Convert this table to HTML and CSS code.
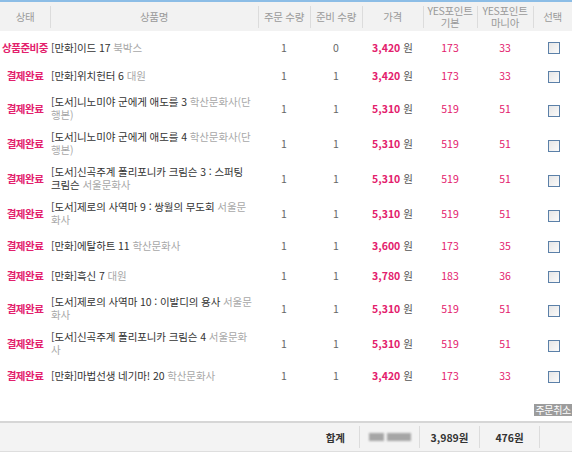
FILE: index.html
```html
<!DOCTYPE html>
<html lang="ko">
<head>
<meta charset="utf-8">
<link rel="stylesheet" href="styles.css">
</head>
<body>
<div class="wrap">
<table class="orders">
<colgroup>
<col class="c-status"><col class="c-name"><col class="c-qty"><col class="c-qty"><col class="c-price"><col class="c-pt1"><col class="c-pt2"><col class="c-sel">
</colgroup>
<thead>
<tr>
<th class="first">상태</th>
<th>상품명</th>
<th>주문 수량</th>
<th>준비 수량</th>
<th>가격</th>
<th>YES포인트<br>기본</th>
<th>YES포인트<br>마니아</th>
<th>선택</th>
</tr>
</thead>
<tbody>
<tr class="single">
<td class="status">상품준비중</td>
<td class="name">[만화]이드 17 <span class="pub">북박스</span></td>
<td class="num">1</td><td class="num">0</td>
<td class="price"><b>3,420</b> 원</td>
<td class="pt">173</td><td class="pt">33</td>
<td class="sel"><span class="chk"></span></td>
</tr>
<tr class="single">
<td class="status">결제완료</td>
<td class="name">[만화]위치헌터 6 <span class="pub">대원</span></td>
<td class="num">1</td><td class="num">1</td>
<td class="price"><b>3,420</b> 원</td>
<td class="pt">173</td><td class="pt">33</td>
<td class="sel"><span class="chk"></span></td>
</tr>
<tr>
<td class="status">결제완료</td>
<td class="name">[도서]니노미야 군에게 애도를 3 <span class="pub">학산문화사(단행본)</span></td>
<td class="num">1</td><td class="num">1</td>
<td class="price"><b>5,310</b> 원</td>
<td class="pt">519</td><td class="pt">51</td>
<td class="sel"><span class="chk low"></span></td>
</tr>
<tr>
<td class="status">결제완료</td>
<td class="name">[도서]니노미야 군에게 애도를 4 <span class="pub">학산문화사(단행본)</span></td>
<td class="num">1</td><td class="num">1</td>
<td class="price"><b>5,310</b> 원</td>
<td class="pt">519</td><td class="pt">51</td>
<td class="sel"><span class="chk low"></span></td>
</tr>
<tr>
<td class="status">결제완료</td>
<td class="name">[도서]신곡주계 폴리포니카 크림슨 3 : 스퍼팅 크림슨 <span class="pub">서울문화사</span></td>
<td class="num">1</td><td class="num">1</td>
<td class="price"><b>5,310</b> 원</td>
<td class="pt">519</td><td class="pt">51</td>
<td class="sel"><span class="chk low"></span></td>
</tr>
<tr>
<td class="status">결제완료</td>
<td class="name">[도서]제로의 사역마 9 : 쌍월의 무도회 <span class="pub">서울문화사</span></td>
<td class="num">1</td><td class="num">1</td>
<td class="price"><b>5,310</b> 원</td>
<td class="pt">519</td><td class="pt">51</td>
<td class="sel"><span class="chk low"></span></td>
</tr>
<tr class="single">
<td class="status">결제완료</td>
<td class="name">[만화]에탈하트 11 <span class="pub">학산문화사</span></td>
<td class="num">1</td><td class="num">1</td>
<td class="price"><b>3,600</b> 원</td>
<td class="pt">173</td><td class="pt">35</td>
<td class="sel"><span class="chk"></span></td>
</tr>
<tr class="single">
<td class="status">결제완료</td>
<td class="name">[만화]흑신 7 <span class="pub">대원</span></td>
<td class="num">1</td><td class="num">1</td>
<td class="price"><b>3,780</b> 원</td>
<td class="pt">183</td><td class="pt">36</td>
<td class="sel"><span class="chk"></span></td>
</tr>
<tr>
<td class="status">결제완료</td>
<td class="name">[도서]제로의 사역마 10 : 이발디의 용사 <span class="pub">서울문화사</span></td>
<td class="num">1</td><td class="num">1</td>
<td class="price"><b>5,310</b> 원</td>
<td class="pt">519</td><td class="pt">51</td>
<td class="sel"><span class="chk low"></span></td>
</tr>
<tr>
<td class="status">결제완료</td>
<td class="name">[도서]신곡주계 폴리포니카 크림슨 4 <span class="pub">서울문화사</span></td>
<td class="num">1</td><td class="num">1</td>
<td class="price"><b>5,310</b> 원</td>
<td class="pt">519</td><td class="pt">51</td>
<td class="sel"><span class="chk low"></span></td>
</tr>
<tr class="single">
<td class="status">결제완료</td>
<td class="name">[만화]마법선생 네기마! 20 <span class="pub">학산문화사</span></td>
<td class="num">1</td><td class="num">1</td>
<td class="price"><b>3,420</b> 원</td>
<td class="pt">173</td><td class="pt">33</td>
<td class="sel"><span class="chk"></span></td>
</tr>
</tbody>
</table>
<div class="actions"><span class="cancel-btn">주문취소</span></div>
<div class="total">
<div class="t-label">합계</div>
<div class="t-cell"><span class="blur a"></span><span class="blur b"></span></div>
<div class="t-cell">3,989원</div>
<div class="t-cell">476원</div>
<div class="t-cell last"></div>
</div>
</div>
</body>
</html>
```
FILE: styles.css
```css
html, body {
  margin: 0;
  padding: 0;
  background: #fff;
}
body {
  font-family: "Noto Sans CJK KR", "DejaVu Sans", sans-serif;
  font-size: 11px;
  color: #333;
  width: 572px;
  height: 452px;
  overflow: hidden;
}
.wrap {
  width: 572px;
}
.orders {
  width: 572px;
  border-collapse: collapse;
  table-layout: fixed;
  border-top: 2px solid #8cbde6;
}
.c-status { width: 50px; }
.c-name { width: 208px; }
.c-qty { width: 52px; }
.c-price { width: 61px; }
.c-pt1 { width: 54px; }
.c-pt2 { width: 56px; }
.c-sel { width: 39px; }

.orders th {
  height: 29px;
  padding: 0;
  font-weight: normal;
  color: #9a9a9a;
  font-size: 10.5px;
  line-height: 12px;
  letter-spacing: -0.3px;
  text-align: center;
  vertical-align: middle;
  background: linear-gradient(#dcdcdc, #dcdcdc) left center / 1px 22px no-repeat, #f2f2f2;
}
.orders th.first {
  background: #f2f2f2;
}
.orders td {
  padding: 4px 0 5px;
  line-height: 13px;
  vertical-align: middle;
  text-align: center;
  height: 26px;
  box-sizing: border-box;
}
.orders tbody tr {
  height: 35px;
}
.orders tbody tr.single {
  height: 30px;
}
.orders tbody tr:first-child td {
  padding-top: 7px;
}
.status {
  color: #e3206c;
  font-weight: bold;
  font-size: 10.5px;
  letter-spacing: -0.5px;
  white-space: nowrap;
}
.orders td.name {
  text-align: left;
  padding-left: 1px;
  padding-right: 4px;
  color: #333;
  font-size: 10.5px;
  letter-spacing: -0.1px;
}
.pub {
  color: #a8a8a8;
}
.num {
  color: #666;
  font-size: 10.5px;
}
.price {
  color: #555;
  white-space: nowrap;
  font-size: 10.5px;
}
.price b {
  color: #e3206c;
}
.pt {
  color: #e3206c;
  font-size: 10.5px;
}
.chk {
  display: inline-block;
  width: 10px;
  height: 10px;
  border: 1px solid #5b80a8;
  background: linear-gradient(135deg, #e6e6e6, #fafafa);
  vertical-align: middle;
  margin-left: 3px;
}
.chk.low {
  margin-top: 6px;
}
.actions {
  display: flex;
  justify-content: flex-end;
  padding-top: 13px;
  height: 14px;
}
.cancel-btn {
  background: #9c9c9c;
  color: #fff;
  font-size: 10px;
  line-height: 12px;
  height: 12px;
  padding: 0 1px;
  letter-spacing: -0.3px;
}
.total {
  margin-top: 3px;
  display: flex;
  height: 28px;
  border-top: 2px solid #d6d6d6;
  border-bottom: 1px solid #dedede;
  background: #f3f3f3;
  align-items: center;
  font-weight: bold;
  color: #333;
  font-size: 10.5px;
}
.t-label {
  width: 359px;
  box-sizing: border-box;
  padding-right: 14px;
  text-align: right;
}
.t-cell {
  width: 60px;
  height: 22px;
  border-left: 1px solid #dcdcdc;
  box-sizing: border-box;
  display: flex;
  align-items: center;
  justify-content: center;
}
.t-cell.last {
  width: 33px;
}
.blur {
  display: inline-block;
  height: 8px;
  background: #a6a6a6;
  filter: blur(0.8px);
}
.blur.a { width: 15px; margin-right: 3px; }
.blur.b { width: 24px; }
```
